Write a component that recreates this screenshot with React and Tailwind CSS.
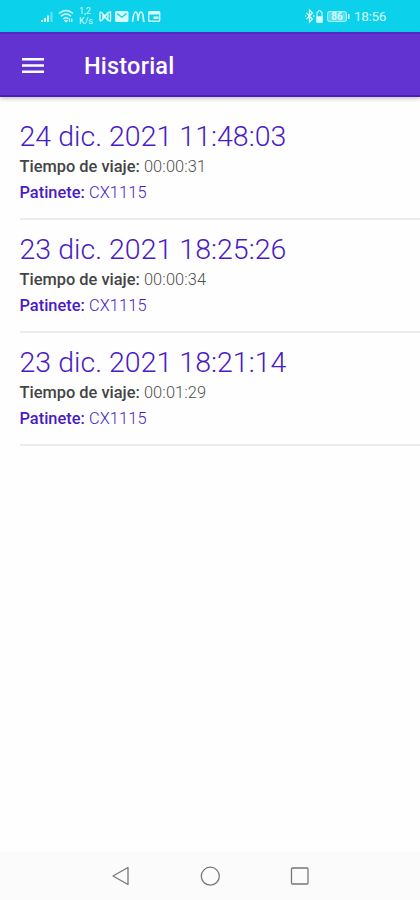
const trips = [
  { date: '24 dic. 2021 11:48:03', time: '00:00:31', scooter: 'CX1115' },
  { date: '23 dic. 2021 18:25:26', time: '00:00:34', scooter: 'CX1115' },
  { date: '23 dic. 2021 18:21:14', time: '00:01:29', scooter: 'CX1115' },
];

function StatusBar() {
  return (
    <div className="flex h-8 items-center bg-[#0bd1ea] pl-10 pr-[34px] text-[#d5fbff]">
      <svg className="h-4 w-[13px]" viewBox="0 0 13 16" fill="currentColor">
        <path d="M1 12h2v2H1zM4 10h2v4H4zM7 7.500h2v6.500H7z" />
        <path d="M10.500 4H12.500v10h-2z" opacity=".45" />
      </svg>
      <svg className="ml-[5px] h-4 w-4" viewBox="0 0 16 16" fill="none" stroke="currentColor" strokeWidth="1.5">
        <path d="M1 5.500q7-6 14 0M3 8.300q5-4.500 10 0M5.500 11q2.500-2.500 5 0" />
        <path d="M6.500 12l1.500 1.800 1.500-1.800M11.500 10.500v3.500M13.800 10.500v3.500" strokeWidth="1.2" />
      </svg>
      <div className="ml-[5px] flex w-4 flex-col text-[9px] leading-[10px]">
        <span>1,2</span>
        <span>K/s</span>
      </div>
      <svg className="ml-1 h-4 w-[14px]" viewBox="0 0 14 16" fill="none" stroke="currentColor" strokeWidth="1.4">
        <path d="M1 4v9M1 4q2 0 3.500 2.500l3.500 5q1.500 1.500 3.500 1.500V4q-2 0-3.500 1.500l-3.500 5Q3 13 1 13M4 5.500v6M8.800 5.500v6" />
      </svg>
      <svg className="ml-[2px] h-4 w-[14px]" viewBox="0 0 14 16">
        <rect x="0" y="3" width="13.500" height="11" rx="1.500" fill="currentColor" />
        <path d="M2 5.500l4.800 3.700 4.800-3.700" fill="none" stroke="#0bd1ea" strokeWidth="1.400" />
      </svg>
      <svg className="ml-[2px] h-4 w-[15px]" viewBox="0 0 15 16" fill="none" stroke="currentColor" strokeWidth="1.700">
        <path d="M1.500 13.800Q2.500 4 4.700 4T7 13Q7.800 4 10 4t2.500 8.500q.2 1 1.200 1" />
      </svg>
      <svg className="ml-[2px] h-4 w-[13px]" viewBox="0 0 13 16">
        <rect x=".7" y="3.700" width="11" height="9.600" rx="1.200" fill="none" stroke="currentColor" strokeWidth="1.400" />
        <path d="M1 4h11v2.500H1zM5.500 8.500h5v2.500h-5z" fill="currentColor" />
      </svg>
      <svg className="ml-auto h-4 w-[20px]" viewBox="0 0 20 16" fill="none" stroke="currentColor" strokeWidth="1.300">
        <path d="M2.500 5l6 6-3 3V2l3 3-6 6M1 8h1M9 8h1.500" />
        <path d="M13 6V4h1.500V2.500h2V4H18v10h-5V6" strokeWidth="1" />
        <path d="M13 9h5v5h-5z" fill="currentColor" />
      </svg>
      <svg className="ml-[3px] h-4 w-6" viewBox="0 0 24 16">
        <rect x=".5" y="3.500" width="19" height="10" rx="2" fill="currentColor" fillOpacity=".35" stroke="currentColor" strokeWidth=".8" />
        <path d="M21 6h1.500v5H21z" fill="currentColor" />
        <text x="4.300" y="12" fontSize="10" fontWeight="700" fill="currentColor">86</text>
      </svg>
      <span className="ml-[3px] w-8 whitespace-nowrap text-[13.5px] leading-4 tracking-[-0.3px]">18:56</span>
    </div>
  );
}

function Trip({ date, time, scooter }) {
  return (
    <li className="h-[113px] border-b-2 border-[#ececec] pt-[11px]">
      <h2 className="h-9 whitespace-nowrap text-[28.5px] font-light leading-[37px] tracking-[0.03px] text-[#4a1bc4]">{date}</h2>
      <p className="h-[26px] whitespace-nowrap text-[16.4px] font-light leading-[25px] tracking-[0.12px] text-[#505050]">
        <span className="font-medium tracking-normal text-[#444]">Tiempo de viaje:</span> {time}
      </p>
      <p className="h-[26px] whitespace-nowrap text-[16.4px] font-light leading-[25px] tracking-[0.12px] text-[#4a1bc4]">
        <span className="font-medium tracking-normal">Patinete:</span> {scooter}
      </p>
    </li>
  );
}

export default function App() {
  return (
    <div className="flex h-[900px] w-[420px] flex-col overflow-hidden bg-[#fefefe] font-[Roboto,sans-serif]">
      <StatusBar />
      <header className="z-10 flex h-[65px] shrink-0 items-center border-y-2 border-t-[#5528c5] border-b-[#4e1cbd] bg-[#6233d1] pl-[22px] text-white shadow-[0_2px_4px_rgba(0,0,0,0.22)]">
        <svg className="mt-px h-[17px] w-[22px]" viewBox="0 0 22 17" fill="currentColor">
          <path d="M0 1h22v2.500H0zM0 7.300h22v2.500H0zM0 13.600h22v2.500H0z" />
        </svg>
        <h1 className="ml-10 mt-[2px] text-[23.5px] font-medium leading-8 tracking-[0.2px]">Historial</h1>
      </header>
      <ul className="grow pl-[19.5px] pt-[10px]">
        {trips.map((trip) => (
          <Trip key={trip.date} {...trip} />
        ))}
      </ul>
      <nav className="flex h-12 shrink-0 items-center justify-center gap-[65.5px] bg-[#fbfbfb] text-[#777]">
        <svg className="h-6 w-6" viewBox="0 0 24 24" fill="none" stroke="currentColor" strokeWidth="1.300" strokeLinejoin="round">
          <path d="M19 3.500v17L4 12z" />
        </svg>
        <svg className="h-6 w-6" viewBox="0 0 24 24" fill="none" stroke="currentColor" strokeWidth="1.300">
          <circle cx="12.300" cy="12.200" r="9" />
        </svg>
        <svg className="h-6 w-6" viewBox="0 0 24 24" fill="none" stroke="currentColor" strokeWidth="1.300">
          <rect x="3.500" y="4" width="16.500" height="16" rx="1" />
        </svg>
      </nav>
    </div>
  );
}
